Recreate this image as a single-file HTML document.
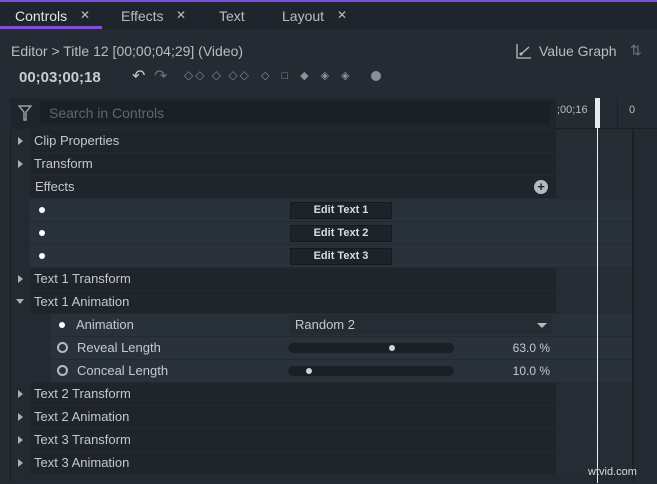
<!DOCTYPE html>
<html><head><meta charset="utf-8"><style>
*{margin:0;padding:0;box-sizing:border-box}
body{width:657px;height:483px;overflow:hidden;background:#242b33;font-family:"Liberation Sans",sans-serif;color:#c4c9ce;position:relative;font-size:13px}
.a{position:absolute}
.row{position:absolute;height:22px;line-height:22px;font-size:13px}
.tri{position:absolute;left:18px;width:0;height:0;border-top:4px solid transparent;border-bottom:4px solid transparent;border-left:5px solid #aab0b6;top:7px}
.dot{position:absolute;width:6px;height:6px;border-radius:3px;background:#fff}
.ring{position:absolute;width:11px;height:11px;border-radius:6px;border:2px solid #b4bac0}
.btn{position:absolute;left:290px;width:102px;height:17px;top:3px;background:#1d2329;border:1px solid #151a1f;color:#d9dde0;font-size:11px;font-weight:bold;text-align:center;line-height:15px}
.tl{position:absolute;left:556px;width:77px;height:22px;background:#252c34;border-right:1px solid #1a1f25}
#w{position:absolute;left:0;top:1px;width:657px;height:483px}
</style></head><body>
<div class="a" style="left:0;top:0;width:657px;height:2px;background:#7b4fd6"></div>
<div class="a" style="left:0;top:2px;width:657px;height:27px;background:#1f252c"></div>
<div class="a" style="left:0;top:26px;width:102px;height:3px;background:#7b4fd6"></div>
<div class="a" style="left:15px;top:8px;font-size:14px;color:#e3e6e9">Controls</div>
<div class="a" style="left:80px;top:8px;font-size:12px;color:#b8bec4">✕</div>
<div class="a" style="left:121px;top:8px;font-size:14px;color:#b8bec4">Effects</div>
<div class="a" style="left:176px;top:8px;font-size:12px;color:#b8bec4">✕</div>
<div class="a" style="left:219px;top:8px;font-size:14px;color:#b8bec4">Text</div>
<div class="a" style="left:282px;top:8px;font-size:14px;color:#b8bec4">Layout</div>
<div class="a" style="left:337px;top:8px;font-size:12px;color:#b8bec4">✕</div>

<div class="a" style="left:11px;top:43px;font-size:14px;color:#b8bec4">Editor &gt; Title 12 [00;00;04;29] (Video)</div>
<div class="a" style="left:19px;top:69px;font-size:15px;font-weight:bold;color:#c8cdd2">00;03;00;18</div>
<div class="a" style="left:132px;top:66px;font-size:16px;color:#c8cdd2">↶</div>
<div class="a" style="left:154px;top:66px;font-size:16px;color:#6b737b">↷</div>
<div class="a" style="left:184px;top:68px;font-size:12px;color:#7d858d;letter-spacing:2px">◇◇ ◇ ◇◇</div>
<div class="a" style="left:261px;top:69px;font-size:11px;color:#8a9299;letter-spacing:12px">◇□◆◈◈</div>
<div class="a" style="left:371px;top:71px;width:10px;height:10px;border-radius:5px;background:#8a9299"></div>

<svg class="a" style="left:516px;top:43px" width="16" height="16"><path d="M1 1V15H15" stroke="#b8bec4" fill="none" stroke-width="1.3"/><path d="M4 12L13 4" stroke="#b8bec4" stroke-width="1.3"/><circle cx="5" cy="11" r="1.5" fill="#b8bec4"/></svg>
<div class="a" style="left:539px;top:43px;font-size:14px;color:#b8bec4">Value Graph</div>
<div class="a" style="left:630px;top:42px;font-size:14px;color:#6b737b">⇅</div>

<div class="a" style="left:10px;top:98px;width:647px;height:385px;background:#232a32;border-left:1px solid #1a1f25"></div>
<div class="a" style="left:10px;top:98px;width:546px;height:31px;background:#1f252c"></div>
<svg class="a" style="left:18px;top:105px" width="14" height="16"><path d="M1 1H13L8 7V15H6V7Z" stroke="#9aa1a8" fill="none" stroke-width="1.4"/></svg>
<div class="a" style="left:40px;top:101px;width:510px;height:23px;background:#1b2026"></div>
<div class="a" style="left:49px;top:105px;font-size:14px;color:#5e666e">Search in Controls</div>
<div class="a" style="left:556px;top:98px;width:101px;height:31px;background:#242b33;border-bottom:1px solid #1a1f25"></div>
<div class="a" style="left:557px;top:104px;font-size:11px;color:#b8bec4">;00;16</div>
<div class="a" style="left:629px;top:104px;font-size:11px;color:#b8bec4">0</div>
<div class="a" style="left:617px;top:98px;width:1px;height:31px;background:#1a1f25"></div>
<div class="a" style="left:633px;top:129px;width:1px;height:354px;background:#1a1f25"></div>

<div id="w">
<div class="row" style="left:30px;top:129px;width:526px;background:#1f252b"><span style="margin-left:4px">Clip Properties</span></div><div class="tri" style="top:136px"></div><div class="tl" style="top:129px"></div>
<div class="row" style="left:30px;top:152px;width:526px;background:#1f252b"><span style="margin-left:4px">Transform</span></div><div class="tri" style="top:159px"></div><div class="tl" style="top:152px"></div>
<div class="row" style="left:30px;top:175px;width:526px;background:#1f252b"><span style="margin-left:5px">Effects</span></div><div class="a" style="left:534px;top:179px;width:14px;height:14px;border-radius:7px;background:#b4bac0;color:#1f252b;font-weight:bold;font-size:13px;line-height:14px;text-align:center">+</div><div class="tl" style="top:175px"></div>

<div class="row" style="left:30px;top:198px;width:526px;background:#29313a"></div><div class="dot" style="left:39px;top:206px"></div><div class="btn" style="top:201px">Edit Text 1</div><div class="tl" style="top:198px;background:#29313a"></div>
<div class="row" style="left:30px;top:221px;width:526px;background:#29313a"></div><div class="dot" style="left:39px;top:229px"></div><div class="btn" style="top:224px">Edit Text 2</div><div class="tl" style="top:221px;background:#29313a"></div>
<div class="row" style="left:30px;top:244px;width:526px;background:#29313a"></div><div class="dot" style="left:39px;top:252px"></div><div class="btn" style="top:247px">Edit Text 3</div><div class="tl" style="top:244px;background:#29313a"></div>

<div class="row" style="left:30px;top:267px;width:526px;background:#1f252b"><span style="margin-left:4px">Text 1 Transform</span></div><div class="tri" style="top:274px"></div><div class="tl" style="top:267px"></div>
<div class="row" style="left:30px;top:290px;width:526px;background:#1f252b"><span style="margin-left:4px">Text 1 Animation</span></div><div class="a" style="left:16px;top:298px;border-left:4px solid transparent;border-right:4px solid transparent;border-top:5px solid #aab0b6"></div><div class="tl" style="top:290px"></div>

<div class="row" style="left:51px;top:313px;width:505px;background:#29313a"><span style="margin-left:25px">Animation</span></div><div class="dot" style="left:59px;top:321px"></div>
<div class="a" style="left:289px;top:314px;width:263px;height:20px;background:#252c34"></div><div class="a" style="left:295px;top:316px;font-size:13px;color:#c4c9ce">Random 2</div><div class="a" style="left:537px;top:322px;border-left:5px solid transparent;border-right:5px solid transparent;border-top:5px solid #b4bac0"></div><div class="tl" style="top:313px;background:#29313a"></div>

<div class="row" style="left:51px;top:336px;width:505px;background:#29313a"><span style="margin-left:26px">Reveal Length</span></div><div class="ring" style="left:57px;top:341px"></div>
<div class="a" style="left:288px;top:342px;width:166px;height:10px;border-radius:5px;background:#1a1f25"></div><div class="a" style="left:389px;top:344px;width:6px;height:6px;border-radius:3px;background:#d0d4d8"></div>
<div class="a" style="left:470px;top:340px;width:80px;text-align:right;font-size:12px">63.0 %</div><div class="tl" style="top:336px;background:#29313a"></div>

<div class="row" style="left:51px;top:359px;width:505px;background:#29313a"><span style="margin-left:26px">Conceal Length</span></div><div class="ring" style="left:57px;top:364px"></div>
<div class="a" style="left:288px;top:365px;width:166px;height:10px;border-radius:5px;background:#1a1f25"></div><div class="a" style="left:306px;top:367px;width:6px;height:6px;border-radius:3px;background:#d0d4d8"></div>
<div class="a" style="left:470px;top:363px;width:80px;text-align:right;font-size:12px">10.0 %</div><div class="tl" style="top:359px;background:#29313a"></div>

<div class="row" style="left:30px;top:382px;width:526px;background:#1f252b"><span style="margin-left:4px">Text 2 Transform</span></div><div class="tri" style="top:389px"></div><div class="tl" style="top:382px"></div>
<div class="row" style="left:30px;top:405px;width:526px;background:#1f252b"><span style="margin-left:4px">Text 2 Animation</span></div><div class="tri" style="top:412px"></div><div class="tl" style="top:405px"></div>
<div class="row" style="left:30px;top:428px;width:526px;background:#1f252b"><span style="margin-left:4px">Text 3 Transform</span></div><div class="tri" style="top:435px"></div><div class="tl" style="top:428px"></div>
<div class="row" style="left:30px;top:451px;width:526px;background:#1f252b"><span style="margin-left:4px">Text 3 Animation</span></div><div class="tri" style="top:458px"></div><div class="tl" style="top:451px"></div>
</div>

<div class="a" style="left:595px;top:98px;width:5px;height:30px;background:#e8eaec"></div>
<div class="a" style="left:597px;top:128px;width:1px;height:355px;background:#f0f0f0"></div>
<div class="a" style="left:588px;top:466px;font-size:11px;color:#d8dadc">wtvid.com</div>
</body></html>
